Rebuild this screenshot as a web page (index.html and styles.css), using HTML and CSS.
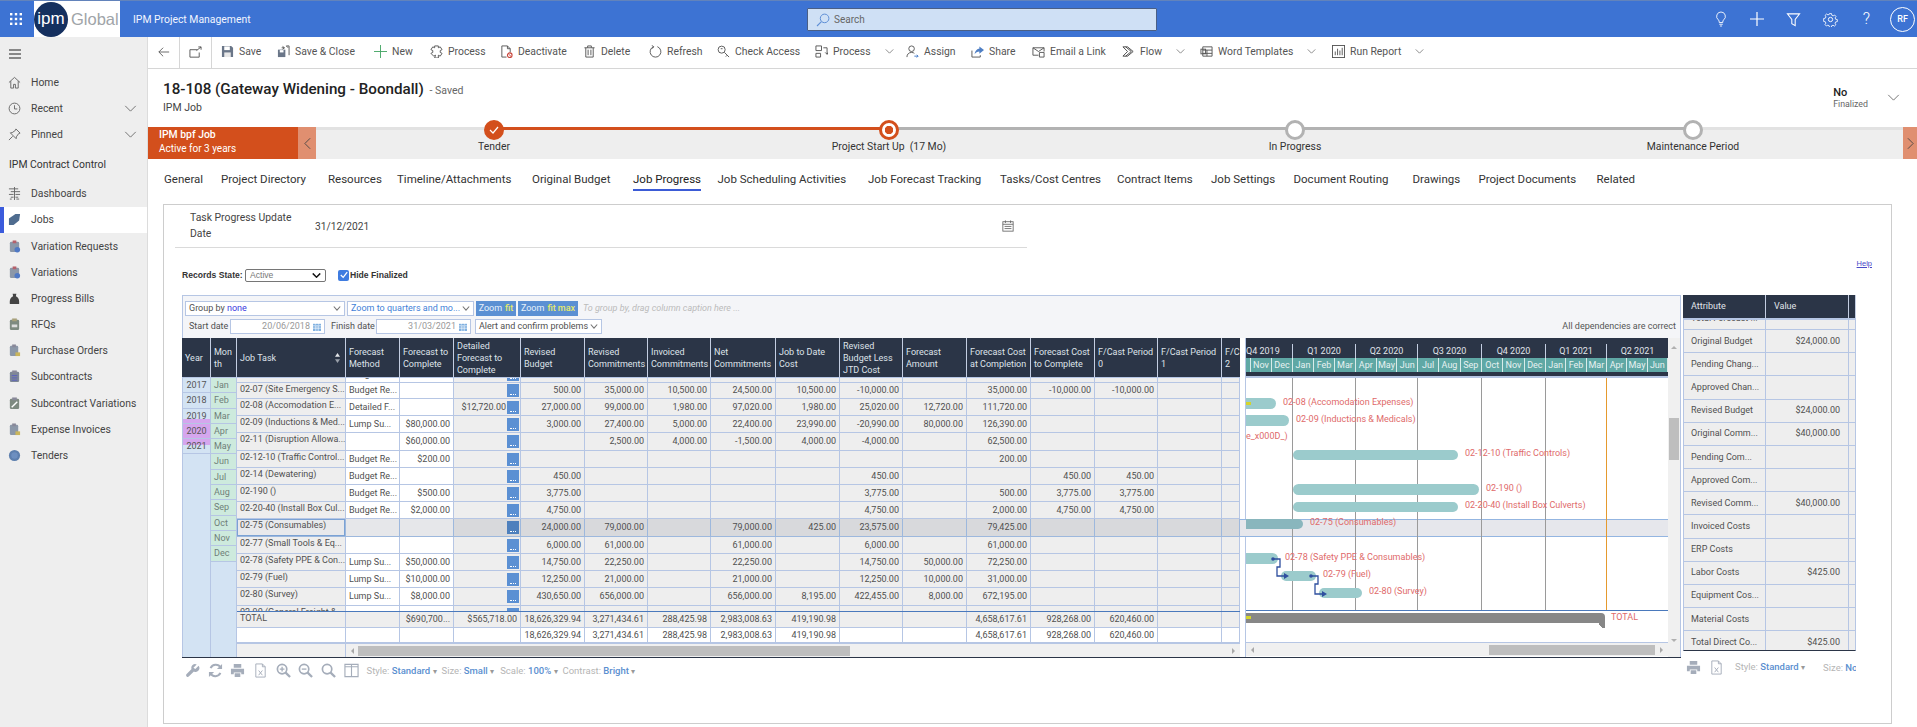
FILE: index.html
```html
<!DOCTYPE html>
<html lang="en">
<head>
<meta charset="utf-8">
<title>IPM Project Management</title>
<link rel="stylesheet" href="styles.css">
</head>
<body>
<header class="top">
  <svg class="waffle" viewBox="0 0 12 12" width="12" height="12"><g fill="#fff"><rect x="0" y="0" width="2.4" height="2.4"/><rect x="4.8" y="0" width="2.4" height="2.4"/><rect x="9.6" y="0" width="2.4" height="2.4"/><rect x="0" y="4.8" width="2.4" height="2.4"/><rect x="4.8" y="4.8" width="2.4" height="2.4"/><rect x="9.6" y="4.8" width="2.4" height="2.4"/><rect x="0" y="9.6" width="2.4" height="2.4"/><rect x="4.8" y="9.6" width="2.4" height="2.4"/><rect x="9.6" y="9.6" width="2.4" height="2.4"/></g></svg>
  <div class="logo"><span class="logo-c">ipm</span><span class="logo-g">Global</span></div>
  <div class="app-title">IPM Project Management</div>
  <div class="search">
    <svg viewBox="0 0 14 14" width="14" height="14"><circle cx="8.6" cy="5.4" r="4.3" fill="none" stroke="#5f8fd6" stroke-width="1"/><path d="M5.4 8.6 1 13" stroke="#5f8fd6" stroke-width="1.1"/></svg>
    <span>Search</span>
  </div>
  <div class="top-icons">
    <svg viewBox="0 0 16 18" width="14" height="16"><path d="M8 1a5 5 0 0 0-3 9c.8.7 1 1.5 1 3h4c0-1.500.2-2.300 1-3a5 5 0 0 0-3-9zM6 15h4M6.800 17h2.400" fill="none" stroke="#fff"/></svg>
    <svg viewBox="0 0 16 16" width="16" height="16"><path d="M8 1v14M1 8h14" stroke="#fff" stroke-width="1.200"/></svg>
    <svg viewBox="0 0 16 16" width="15" height="15"><path d="M1.500 2h13L9.800 8v6.500L6.200 12.500V8z" fill="none" stroke="#fff" stroke-width="1.100"/></svg>
    <svg viewBox="0 0 16 16" width="15" height="15"><g fill="none" stroke="#fff"><circle cx="8" cy="8" r="2.300"/><path d="M6.800 1h2.400l.4 2 1.500.7 1.800-1 1.600 1.700-1 1.700.6 1.600 2 .4v2.400l-2 .4-.7 1.500 1 1.800-1.700 1.600-1.700-1-1.600.6-.4 2H6.800l-.4-2-1.500-.7-1.800 1-1.600-1.700 1-1.700-.6-1.600-2-.4V6.800l2-.4.7-1.500-1-1.800 1.700-1.600 1.700 1 1.600-.6z" transform="translate(.8 .8) scale(.9)"/></g></svg>
    <span class="q">?</span>
    <span class="avatar">RF</span>
  </div>
</header>
<div class="shell">
  <aside class="side">
    <svg class="burger" viewBox="0 0 12 10" width="12" height="10"><path d="M0 1h12M0 5h12M0 9h12" stroke="#222" stroke-width="1.200"/></svg>
    <a class="item"><svg viewBox="0 0 14 14" width="13" height="13"><path d="M1 7 7 1.500 13 7M3 5.500V13h3V9h2v4h3V5.500" fill="none" stroke="#666"/></svg>Home</a>
    <a class="item"><svg viewBox="0 0 14 14" width="13" height="13"><circle cx="7" cy="7" r="5.800" fill="none" stroke="#666"/><path d="M7 3.500V7.500H10" fill="none" stroke="#666"/></svg>Recent<svg class="chev" viewBox="0 0 14 8" width="13" height="7"><path d="M1 1 7 7 13 1" fill="none" stroke="#666"/></svg></a>
    <a class="item"><svg viewBox="0 0 14 14" width="13" height="13"><path d="M8.500 1 13 5.500 11.500 6 9 9.500 8.800 11.500 2.500 5.200 4.500 5 8 2.500zM5 9 1 13" fill="none" stroke="#666"/></svg>Pinned<svg class="chev" viewBox="0 0 14 8" width="13" height="7"><path d="M1 1 7 7 13 1" fill="none" stroke="#666"/></svg></a>
    <div class="side-head">IPM Contract Control</div>
    <a class="item"><svg viewBox="0 0 14 14" width="13" height="13"><path d="M7 0v14M1 2h10M3 5h10M1 8h5M8 8h5M3 11h3M8 11h3M2 13h2M9 13h3" fill="none" stroke="#666"/></svg>Dashboards</a>
    <a class="item on"><svg viewBox="0 0 14 14" width="13" height="13"><path d="M1 6 8 1l5 0-1 7-6 5-5 0z" fill="#4f6c8f"/></svg>Jobs</a>
    <a class="item"><svg viewBox="0 0 14 14" width="13" height="13"><rect x="2" y="2" width="10" height="11" rx="1.500" fill="#8b97a8"/><rect x="5" y="0.500" width="4" height="3" fill="#b5616b"/><circle cx="10" cy="10.500" r="3" fill="#4f78c4"/></svg>Variation Requests</a>
    <a class="item"><svg viewBox="0 0 14 14" width="13" height="13"><rect x="2" y="2" width="10" height="11" rx="1.500" fill="#8b97a8"/><rect x="5" y="0.500" width="4" height="3" fill="#b5616b"/><circle cx="10" cy="10.500" r="3" fill="#4f78c4"/></svg>Variations</a>
    <a class="item"><svg viewBox="0 0 14 14" width="13" height="13"><path d="M5 2h4L8.500 4.500C11 5.500 12.500 8 12 13H2C1.500 8 3 5.500 5.500 4.500z" fill="#444"/></svg>Progress Bills</a>
    <a class="item"><svg viewBox="0 0 14 14" width="13" height="13"><rect x="2" y="2" width="10" height="11" rx="1.500" fill="#7e8a80"/><rect x="4.500" y="0.500" width="5" height="3" fill="#a7a07a"/><rect x="4" y="7" width="6" height="3" fill="#ddd"/></svg>RFQs</a>
    <a class="item"><svg viewBox="0 0 14 14" width="13" height="13"><rect x="2" y="2" width="9" height="11" rx="1.500" fill="#8b97a8"/><rect x="4.500" y="0.500" width="4" height="3" fill="#889"/><rect x="8" y="9" width="5" height="4" fill="#c9b55c"/></svg>Purchase Orders</a>
    <a class="item"><svg viewBox="0 0 14 14" width="13" height="13"><rect x="2" y="2" width="10" height="11" rx="1.500" fill="#7d8796"/><rect x="4.500" y="0.500" width="5" height="3" fill="#889"/><path d="M4 6h6M4 8.500h6M4 11h6" stroke="#5b5fc0"/></svg>Subcontracts</a>
    <a class="item"><svg viewBox="0 0 14 14" width="13" height="13"><rect x="2" y="2" width="10" height="11" rx="1.500" fill="#7e8a80"/><rect x="4.500" y="0.500" width="5" height="3" fill="#889"/><path d="M4 11 10 5" stroke="#fff" stroke-width="1.500"/></svg>Subcontract Variations</a>
    <a class="item"><svg viewBox="0 0 14 14" width="13" height="13"><rect x="2" y="2" width="9" height="11" rx="1.500" fill="#8b97a8"/><rect x="4.500" y="0.500" width="4" height="3" fill="#889"/><rect x="8" y="9" width="5" height="4" fill="#c9b55c"/></svg>Expense Invoices</a>
    <a class="item"><svg viewBox="0 0 14 14" width="13" height="13"><circle cx="7" cy="7" r="6" fill="#5d7fae"/><circle cx="7" cy="7" r="3.500" fill="#6d8fc0"/></svg>Tenders</a>
  </aside>
  <main class="main">
    <nav class="cmd">
      <div class="cmd-nav"><svg viewBox="0 0 14 14" width="12" height="12"><path d="M13 7H1M6 2 1 7 6 12" fill="none" stroke="#555"/></svg></div>
      <div class="cmd-nav"><svg viewBox="0 0 14 14" width="13" height="13"><path d="M1 4h8M1 4v8h10V7M8 5l5-4M10 1h3v3" fill="none" stroke="#555"/></svg></div>
      <a class="c"><svg viewBox="0 0 14 14" width="13" height="13"><path d="M1 1h10l2 2v10H1z" fill="#6a7688"/><rect x="3.500" y="1.500" width="6" height="4" fill="#fff"/><rect x="3.500" y="8" width="7" height="5" fill="#e8e8e8"/></svg>Save</a>
      <a class="c"><svg viewBox="0 0 14 14" width="13" height="13"><path d="M1 5h8v8H1z" fill="#6a7688"/><rect x="3" y="5.500" width="4" height="2.500" fill="#fff"/><path d="M5 3h3M6 1.500 8 3 6 4.500M13 1v10M10 1h3M12 3l-2-2" fill="none" stroke="#555"/></svg>Save &amp; Close</a>
      <a class="c"><svg viewBox="0 0 14 14" width="13" height="13"><path d="M7 0v14M0 7h14" stroke="#45a565"/></svg>New</a>
      <a class="c"><svg viewBox="0 0 14 14" width="13" height="13"><path d="M5 1h4v2l2-1 2 3-2 1 0 2 2 1-2 3-2-1v3H5l1-3-2 1-3-3 2-1V6L1 5l2-3 2 1z" fill="none" stroke="#555"/></svg>Process</a>
      <a class="c"><svg viewBox="0 0 14 14" width="13" height="13"><path d="M2 1h6l3 3v4M2 1v12h5M8 1v3h3" fill="none" stroke="#555"/><circle cx="10.500" cy="11" r="2.500" fill="none" stroke="#c8443a" stroke-width="1.200"/><path d="M9 9.500l3 3" stroke="#c8443a"/></svg>Deactivate</a>
      <a class="c"><svg viewBox="0 0 14 14" width="13" height="13"><path d="M1.500 3h11M5 3V1h4v2M3 3v10h8V3M5.500 5v6M8.500 5v6" fill="none" stroke="#555"/></svg>Delete</a>
      <a class="c"><svg viewBox="0 0 14 14" width="13" height="13"><path d="M9 1.800A5.800 5.800 0 1 1 5 1.800M5 1.800 3 .5M5 1.800 3.800 3.800" fill="none" stroke="#555"/></svg>Refresh</a>
      <a class="c"><svg viewBox="0 0 14 14" width="13" height="13"><circle cx="5" cy="5" r="3.800" fill="none" stroke="#555"/><path d="M8 8l5 5M11 11l-1.500 1.500M4 4h2" fill="none" stroke="#555"/></svg>Check Access</a>
      <a class="c"><svg viewBox="0 0 14 14" width="13" height="13"><path d="M1 1h6v5H1zM1 9h5v4H1zM9 3h4v7M11 8l2 2 1-2" fill="none" stroke="#555"/></svg>Process<svg class="cv" viewBox="0 0 10 6" width="9" height="5"><path d="M.5.500 5 5 9.500.5" fill="none" stroke="#777"/></svg></a>
      <a class="c"><svg viewBox="0 0 14 14" width="13" height="13"><circle cx="6" cy="4" r="3" fill="none" stroke="#555"/><path d="M1 13c0-3 2-5 5-5 1.500 0 2.500.5 3 1" fill="none" stroke="#555"/><path d="M9 12h4M11.500 10.500 13 12l-1.500 1.500" fill="none" stroke="#3f78c8"/></svg>Assign</a>
      <a class="c"><svg viewBox="0 0 14 14" width="13" height="13"><path d="M1 6v7h9v-2" fill="none" stroke="#555"/><path d="M4 10c0-4 3-6 5-6V1.500l5 4-5 4V7C7 7 5 8 4 10z" fill="#4f7fc4"/></svg>Share</a>
      <a class="c"><svg viewBox="0 0 14 14" width="13" height="13"><path d="M1 3h12v4M1 3v8h6M1 3l6 4 6-4" fill="none" stroke="#555"/><path d="M8 8h5v5H8z" fill="none" stroke="#555"/></svg>Email a Link</a>
      <a class="c"><svg viewBox="0 0 14 14" width="13" height="13"><path d="M1 2h5l6 5-6 5H1l5-5zM4 2l6 5-6 5" fill="none" stroke="#444"/></svg>Flow<svg class="cv" viewBox="0 0 10 6" width="9" height="5"><path d="M.5.500 5 5 9.500.5" fill="none" stroke="#777"/></svg></a>
      <a class="c"><svg viewBox="0 0 14 14" width="13" height="13"><path d="M3 2h10v10H3zM3 5.500h10M3 9h10M7.500 5.500V12" fill="none" stroke="#555"/><rect x="1" y="4.500" width="5" height="5" fill="none" stroke="#555"/></svg>Word Templates<svg class="cv" viewBox="0 0 10 6" width="9" height="5"><path d="M.5.500 5 5 9.500.5" fill="none" stroke="#777"/></svg></a>
      <a class="c"><svg viewBox="0 0 14 14" width="13" height="13"><rect x=".5" y=".5" width="13" height="13" fill="none" stroke="#555"/><path d="M3.500 11V7M6 11V4M8.500 11V6M11 11V3" stroke="#555"/></svg>Run Report<svg class="cv" viewBox="0 0 10 6" width="9" height="5"><path d="M.5.500 5 5 9.500.5" fill="none" stroke="#777"/></svg></a>
    </nav>
    <section class="head">
      <div>
        <h1>18-108 (Gateway Widening - Boondall) <small>- Saved</small></h1>
        <div class="entity">IPM Job</div>
      </div>
      <div class="hfield">
        <div><b>No</b><span>Finalized</span></div>
        <svg viewBox="0 0 14 8" width="13" height="7"><path d="M1 1 7 7 13 1" fill="none" stroke="#666"/></svg>
      </div>
    </section>
    <section class="bpf">
      <div class="bpf-flag"><b>IPM bpf Job</b><span>Active for 3 years</span></div>
      <div class="bpf-arrow"><svg viewBox="0 0 8 14" width="7" height="13"><path d="M7 1 1 7 7 13" fill="none" stroke="#444"/></svg></div>
      <div class="bpf-track">
        <i class="seg seg-a"></i><i class="seg seg-b"></i><i class="seg seg-c"></i><i class="seg seg-d"></i>
        <div class="st st1"><span class="dot done"><svg viewBox="0 0 10 8" width="10" height="8"><path d="M1 4 4 7 9 1" fill="none" stroke="#fff" stroke-width="1.200"/></svg></span><em>Tender</em></div>
        <div class="st st2"><span class="dot cur"></span><em>Project Start Up&nbsp; (17 Mo)</em></div>
        <div class="st st3"><span class="dot"></span><em>In Progress</em></div>
        <div class="st st4"><span class="dot"></span><em>Maintenance Period</em></div>
      </div>
      <div class="bpf-arrow end"><svg viewBox="0 0 8 14" width="7" height="13"><path d="M1 1 7 7 1 13" fill="none" stroke="#444"/></svg></div>
    </section>
    <nav class="tabs">
      <a>General</a><a>Project Directory</a><a>Resources</a><a>Timeline/Attachments</a><a>Original Budget</a><a class="act">Job Progress</a><a>Job Scheduling Activities</a><a>Job Forecast Tracking</a><a>Tasks/Cost Centres</a><a>Contract Items</a><a>Job Settings</a><a>Document Routing</a><a>Drawings</a><a>Project Documents</a><a>Related</a>
    </nav>
    <section class="card">
      <div class="field">
        <label>Task Progress Update Date</label>
        <span class="fval">31/12/2021</span>
        <svg viewBox="0 0 14 14" width="12" height="12"><rect x="1" y="2" width="12" height="11" fill="none" stroke="#666"/><path d="M1 5h12M4 .5v3M10 .5v3M3 7.500h8M3 10h8" fill="none" stroke="#666"/></svg>
      </div>
      <div class="rec">
        <b class="rl">Records State:</b>
        <span class="recsel">Active<svg viewBox="0 0 10 6" width="9" height="5"><path d="M.5.500 5 5 9.500.5" fill="none" stroke="#111" stroke-width="1.800"/></svg></span>
        <span class="chk"><svg viewBox="0 0 10 10" width="8" height="8"><path d="M1 5 4 8 9 1.500" fill="none" stroke="#fff" stroke-width="1.600"/></svg></span>
        <b>Hide Finalized</b>
        <a class="help">Help</a>
      </div>
      <div class="tgrow">
        <div class="tg-wrap">
          <div class="tg">
            <div class="tb">
              <div class="tb-row">
                <div class="sel w160"><span>Group by <u>none</u></span><svg viewBox="0 0 10 6" width="8" height="5"><path d="M1 .5 5 5 9 .5" fill="none" stroke="#777" stroke-width="1.400"/></svg></div>
                <div class="sel w127"><span><u class="bl">Zoom to quarters and mo...</u></span><svg viewBox="0 0 10 6" width="8" height="5"><path d="M1 .5 5 5 9 .5" fill="none" stroke="#777" stroke-width="1.400"/></svg></div>
                <span class="zb z1">Zoom <b>fit</b></span>
                <span class="zb z2">Zoom <b>fit max</b></span>
                <i class="hint">To group by, drag column caption here ...</i>
              </div>
              <div class="tb-row r2">
                <span class="lb">Start date</span>
                <div class="inp"><span>20/06/2018</span><svg viewBox="0 0 10 10" width="8" height="8"><rect y="1" width="10" height="9" fill="#7fb0e0"/><path d="M0 3.500h10M3.500 3.500V10M6.500 3.500V10M0 6.500h10M3 0v2M7 0v2" stroke="#fff" stroke-width=".8"/></svg></div>
                <span class="lb l2">Finish date</span>
                <div class="inp"><span>31/03/2021</span><svg viewBox="0 0 10 10" width="8" height="8"><rect y="1" width="10" height="9" fill="#7fb0e0"/><path d="M0 3.500h10M3.500 3.500V10M6.500 3.500V10M0 6.500h10M3 0v2M7 0v2" stroke="#fff" stroke-width=".8"/></svg></div>
                <div class="sel w127b"><span>Alert and confirm problems</span><svg viewBox="0 0 10 6" width="8" height="5"><path d="M1 .5 5 5 9 .5" fill="none" stroke="#777" stroke-width="1.400"/></svg></div>
                <span class="deps">All dependencies are correct</span>
              </div>
            </div>
            <div class="tgbody">
              <div class="gridp">
                <table class="hdr">
                  <colgroup><col class="c-y"><col class="c-m"><col class="c-j"><col class="c-fm"><col class="c-fc"><col class="c-df"><col class="c-rb"><col class="c-rc"><col class="c-ic"><col class="c-nc"><col class="c-jd"><col class="c-rl"><col class="c-fa"><col class="c-ca"><col class="c-ct"><col class="c-p0"><col class="c-p1"><col class="c-p2"></colgroup>
                  <tr><th>Year</th><th>Mon<br>th</th><th class="jt">Job Task<svg viewBox="0 0 6 12" width="5" height="10"><path d="M3 0 6 4.500H0z" fill="#e4e6ea"/><path d="M3 12 6 7.500H0z" fill="#9aa0aa"/></svg></th><th>Forecast Method</th><th>Forecast to Complete</th><th>Detailed Forecast to Complete</th><th>Revised Budget</th><th>Revised Commitments</th><th>Invoiced Commitments</th><th>Net Commitments</th><th>Job to Date Cost</th><th>Revised Budget Less JTD Cost</th><th>Forecast Amount</th><th>Forecast Cost at Completion</th><th>Forecast Cost to Complete</th><th>F/Cast Period 0</th><th>F/Cast Period 1</th><th class="cl">F/C<br>2</th></tr>
                </table>
                <div class="gbody">
                  <div class="ycol">
                    <i class="ymark"></i>
                    <span>2017</span><span>2018</span><span>2019</span><span>2020</span><span>2021</span>
                  </div>
                  <div class="mcol">
                    <span>Jan</span><span>Feb</span><span>Mar</span><span>Apr</span><span>May</span><span>Jun</span><span>Jul</span><span>Aug</span><span>Sep</span><span>Oct</span><span>Nov</span><span>Dec</span>
                  </div>
                  <div class="rows">
                    <div class="scroller">
                      <table class="dt">
                        <colgroup><col class="c-j"><col class="c-fm"><col class="c-fc"><col class="c-df"><col class="c-rb"><col class="c-rc"><col class="c-ic"><col class="c-nc"><col class="c-jd"><col class="c-rl"><col class="c-fa"><col class="c-ca"><col class="c-ct"><col class="c-p0"><col class="c-p1"><col class="c-p2"></colgroup>
                        <tr><td class="j">02-06 (Temporary Wor...</td><td class="m">Budget Re...</td><td class="w"></td><td><i class="btn"></i></td><td></td><td></td><td></td><td></td><td></td><td></td><td></td><td></td><td></td><td></td><td></td><td></td></tr>
                        <tr class="s"><td class="j">02-07 (Site Emergency S...</td><td class="m">Budget Re...</td><td class="w"></td><td><i class="btn"></i></td><td>500.00</td><td>35,000.00</td><td>10,500.00</td><td>24,500.00</td><td>10,500.00</td><td>-10,000.00</td><td></td><td>35,000.00</td><td>-10,000.00</td><td>-10,000.00</td><td></td><td></td></tr>
                        <tr><td class="j">02-08 (Accomodation E...</td><td class="m">Detailed F...</td><td class="w"></td><td>$12,720.00<i class="btn"></i></td><td>27,000.00</td><td>99,000.00</td><td>1,980.00</td><td>97,020.00</td><td>1,980.00</td><td>25,020.00</td><td>12,720.00</td><td>111,720.00</td><td></td><td></td><td></td><td></td></tr>
                        <tr><td class="j">02-09 (Inductions &amp; Med...</td><td class="m">Lump Su...</td><td class="w">$80,000.00</td><td><i class="btn"></i></td><td>3,000.00</td><td>27,400.00</td><td>5,000.00</td><td>22,400.00</td><td>23,990.00</td><td>-20,990.00</td><td>80,000.00</td><td>126,390.00</td><td></td><td></td><td></td><td></td></tr>
                        <tr class="t"><td class="j">02-11 (Disruption Allowa...</td><td class="m"></td><td class="w">$60,000.00</td><td><i class="btn"></i></td><td></td><td>2,500.00</td><td>4,000.00</td><td>-1,500.00</td><td>4,000.00</td><td>-4,000.00</td><td></td><td>62,500.00</td><td></td><td></td><td></td><td></td></tr>
                        <tr><td class="j">02-12-10 (Traffic Control...</td><td class="m">Budget Re...</td><td class="w">$200.00</td><td><i class="btn"></i></td><td></td><td></td><td></td><td></td><td></td><td></td><td></td><td>200.00</td><td></td><td></td><td></td><td></td></tr>
                        <tr><td class="j">02-14 (Dewatering)</td><td class="m">Budget Re...</td><td class="w"></td><td><i class="btn"></i></td><td>450.00</td><td></td><td></td><td></td><td></td><td>450.00</td><td></td><td></td><td>450.00</td><td>450.00</td><td></td><td></td></tr>
                        <tr><td class="j">02-190 ()</td><td class="m">Budget Re...</td><td class="w">$500.00</td><td><i class="btn"></i></td><td>3,775.00</td><td></td><td></td><td></td><td></td><td>3,775.00</td><td></td><td>500.00</td><td>3,775.00</td><td>3,775.00</td><td></td><td></td></tr>
                        <tr><td class="j">02-20-40 (Install Box Cul...</td><td class="m">Budget Re...</td><td class="w">$2,000.00</td><td><i class="btn"></i></td><td>4,750.00</td><td></td><td></td><td></td><td></td><td>4,750.00</td><td></td><td>2,000.00</td><td>4,750.00</td><td>4,750.00</td><td></td><td></td></tr>
                        <tr class="t sel-row"><td class="j">02-75 (Consumables)</td><td class="lt"></td><td class="lt"></td><td><i class="btn"></i></td><td>24,000.00</td><td>79,000.00</td><td></td><td>79,000.00</td><td>425.00</td><td>23,575.00</td><td></td><td>79,425.00</td><td></td><td></td><td></td><td></td></tr>
                        <tr><td class="j">02-77 (Small Tools &amp; Eq...</td><td class="m"></td><td class="w"></td><td><i class="btn"></i></td><td>6,000.00</td><td>61,000.00</td><td></td><td>61,000.00</td><td></td><td>6,000.00</td><td></td><td>61,000.00</td><td></td><td></td><td></td><td></td></tr>
                        <tr><td class="j">02-78 (Safety PPE &amp; Con...</td><td class="m">Lump Su...</td><td class="w">$50,000.00</td><td><i class="btn"></i></td><td>14,750.00</td><td>22,250.00</td><td></td><td>22,250.00</td><td></td><td>14,750.00</td><td>50,000.00</td><td>72,250.00</td><td></td><td></td><td></td><td></td></tr>
                        <tr><td class="j">02-79 (Fuel)</td><td class="m">Lump Su...</td><td class="w">$10,000.00</td><td><i class="btn"></i></td><td>12,250.00</td><td>21,000.00</td><td></td><td>21,000.00</td><td></td><td>12,250.00</td><td>10,000.00</td><td>31,000.00</td><td></td><td></td><td></td><td></td></tr>
                        <tr class="t"><td class="j">02-80 (Survey)</td><td class="m">Lump Su...</td><td class="w">$8,000.00</td><td><i class="btn"></i></td><td>430,650.00</td><td>656,000.00</td><td></td><td>656,000.00</td><td>8,195.00</td><td>422,455.00</td><td>8,000.00</td><td>672,195.00</td><td></td><td></td><td></td><td></td></tr>
                        <tr><td class="j">02-90 (General Freight &amp;...</td><td class="m"></td><td class="w"></td><td><i class="btn"></i></td><td></td><td></td><td></td><td></td><td></td><td></td><td></td><td></td><td></td><td></td><td></td><td></td></tr>
                      </table>
                    </div>
                    <table class="dt tot">
                      <colgroup><col class="c-j"><col class="c-fm"><col class="c-fc"><col class="c-df"><col class="c-rb"><col class="c-rc"><col class="c-ic"><col class="c-nc"><col class="c-jd"><col class="c-rl"><col class="c-fa"><col class="c-ca"><col class="c-ct"><col class="c-p0"><col class="c-p1"><col class="c-p2"></colgroup>
                      <tr><td class="j">TOTAL</td><td></td><td>$690,700...</td><td>$565,718.00</td><td>18,626,329.94</td><td>3,271,434.61</td><td>288,425.98</td><td>2,983,008.63</td><td>419,190.98</td><td></td><td></td><td>4,658,617.61</td><td>928,268.00</td><td>620,460.00</td><td></td><td></td></tr>
                      <tr class="wh"><td class="j"></td><td></td><td></td><td></td><td>18,626,329.94</td><td>3,271,434.61</td><td>288,425.98</td><td>2,983,008.63</td><td>419,190.98</td><td></td><td></td><td>4,658,617.61</td><td>928,268.00</td><td>620,460.00</td><td></td><td></td></tr>
                    </table>
                    <div class="hs">
                      <div class="hs-l"></div>
                      <div class="hbar"><i class="al"></i><i class="thumb t1"></i><i class="ar"></i></div>
                    </div>
                  </div>
                </div>
              </div>
              <div class="gantt">
                <div class="gh">
                  <div class="qrow"><span class="q0">Q4 2019</span><span>Q1 2020</span><span>Q2 2020</span><span>Q3 2020</span><span>Q4 2020</span><span>Q1 2021</span><span>Q2 2021</span></div>
                  <div class="qrow mrow">
                    <div class="mq0"><span class="oc"></span><span>Nov</span><span>Dec</span></div>
                    <div><span>Jan</span><span>Feb</span><span>Mar</span></div>
                    <div><span>Apr</span><span>May</span><span>Jun</span></div>
                    <div><span>Jul</span><span>Aug</span><span>Sep</span></div>
                    <div><span>Oct</span><span>Nov</span><span>Dec</span></div>
                    <div><span>Jan</span><span>Feb</span><span>Mar</span></div>
                    <div><span>Apr</span><span>May</span><span>Jun</span></div>
                  </div>
                </div>
                <div class="canvas">
                  <i class="hl" style="top:141px"></i>
                  <i class="vl" style="left:46px"></i><i class="vl" style="left:109px"></i><i class="vl" style="left:171px"></i><i class="vl" style="left:235px"></i><i class="vl" style="left:299px"></i><i class="vl or" style="left:360px"></i>
                  <i class="bar" style="left:0;top:20px;width:30px;height:11px"></i><i class="yel" style="left:0;top:24px"></i><span class="lab" style="left:37px;top:19px">02-08 (Accomodation Expenses)</span>
                  <i class="bar" style="left:0;top:37px;width:43px;height:11px"></i><span class="lab" style="left:50px;top:36px">02-09 (Inductions &amp; Medicals)</span>
                  <span class="lab" style="left:0;top:53px">e_x000D_)</span>
                  <i class="bar full" style="left:47px;top:72px;width:165px;height:10px"></i><span class="lab" style="left:219px;top:70px">02-12-10 (Traffic Controls)</span>
                  <i class="bar full" style="left:47px;top:106px;width:186px;height:11px"></i><span class="lab" style="left:240px;top:105px">02-190 ()</span>
                  <i class="bar full" style="left:47px;top:124px;width:165px;height:10px"></i><span class="lab" style="left:219px;top:122px">02-20-40 (Install Box Culverts)</span>
                  <i class="bar dk" style="left:0;top:141px;width:57px;height:10px"></i><span class="lab" style="left:64px;top:139px">02-75 (Consumables)</span>
                  <i class="bar" style="left:0;top:175px;width:32px;height:11px"></i><span class="lab" style="left:39px;top:174px">02-78 (Safety PPE &amp; Consumables)</span>
                  <i class="bar full" style="left:35px;top:193px;width:35px;height:10px"></i><span class="lab" style="left:77px;top:191px">02-79 (Fuel)</span>
                  <i class="bar full" style="left:73px;top:210px;width:43px;height:10px"></i><span class="lab" style="left:123px;top:208px">02-80 (Survey)</span>
                  <svg class="deps-svg" viewBox="0 0 423 233" width="423" height="233"><g fill="none" stroke="#2f4f9f" stroke-width="1.300"><path d="M27 181H34V189H31V198H41"/><path d="M65 198H72V206H69V216H79"/></g><g fill="#2f4f9f"><circle cx="27" cy="181" r="1.800"/><circle cx="65" cy="198" r="1.800"/><path d="M38 195 43 198 38 201zM76 213 81 216 76 219z"/></g></svg>
                </div>
                <div class="gtot">
                  <div class="tbar"><i class="yel"></i></div>
                  <span class="lab" style="left:365px;top:1px">TOTAL</span>
                </div>
                <div class="hbar gs"><i class="al"></i><i class="thumb t2"></i><i class="ar"></i></div>
              </div>
              <div class="vs"><i class="up"></i><i class="vthumb"></i><i class="dn"></i></div>
            </div>
          </div>
          <div class="tgfoot">
            <svg viewBox="0 0 16 16" width="15" height="15"><path d="M14.500 3 11 6.500 9 5l3.500-3.500A4 4 0 0 0 7 6.500L1.500 12a1.800 1.800 0 0 0 2.500 2.500L9.500 9A4 4 0 0 0 14.500 3z" fill="#a5adba"/></svg>
            <svg viewBox="0 0 16 16" width="15" height="15"><path d="M13.500 5A6 6 0 0 0 2.800 5.500M2.500 11A6 6 0 0 0 13.200 10.500" fill="none" stroke="#a5adba" stroke-width="2.200"/><path d="M15 1v5.500H9.500zM1 15V9.500h5.500z" fill="#a5adba"/></svg>
            <svg viewBox="0 0 16 16" width="15" height="15"><path d="M4 1h8v4H4zM1 6h14v6h-3v-2H4v2H1zM5 11h6v4H5z" fill="#a5adba"/></svg>
            <svg viewBox="0 0 16 16" width="15" height="15"><path d="M3 1h7l3 3v11H3zM10 1v3h3" fill="none" stroke="#a5adba"/><path d="M6 8l4 5M10 8l-4 5" stroke="#a5adba"/></svg>
            <svg viewBox="0 0 16 16" width="15" height="15"><circle cx="6.500" cy="6.500" r="5" fill="none" stroke="#a5adba" stroke-width="1.800"/><path d="M10 10l5 5" stroke="#a5adba" stroke-width="2.400"/><path d="M6.500 4v5M4 6.500h5" stroke="#a5adba" stroke-width="1.400"/></svg>
            <svg viewBox="0 0 16 16" width="15" height="15"><circle cx="6.500" cy="6.500" r="5" fill="none" stroke="#a5adba" stroke-width="1.800"/><path d="M10 10l5 5" stroke="#a5adba" stroke-width="2.400"/><path d="M4 6.500h5" stroke="#a5adba" stroke-width="1.400"/></svg>
            <svg viewBox="0 0 16 16" width="15" height="15"><circle cx="6.500" cy="6.500" r="5" fill="none" stroke="#a5adba" stroke-width="1.800"/><path d="M10 10l5 5" stroke="#a5adba" stroke-width="2.400"/></svg>
            <svg viewBox="0 0 16 16" width="15" height="15"><path d="M1 1.500h14v13H1zM8 1.500v13M1 4h14" fill="none" stroke="#a5adba" stroke-width="1.200"/></svg>
            <span class="ft">Style: <u>Standard</u> <s>▾</s></span>
            <span class="ft">Size: <u>Small</u> <s>▾</s></span>
            <span class="ft">Scale: <u>100%</u> <s>▾</s></span>
            <span class="ft">Contrast: <u>Bright</u> <s>▾</s></span>
          </div>
        </div>
        <div class="panel">
          <div class="ph"><span>Attribute</span><span>Value</span><span></span></div>
          <div class="pbody">
            <div class="pr first"><span>Total Forecast ...</span><span></span><span></span></div>
            <div class="pr"><span>Original Budget</span><span>$24,000.00</span><span></span></div>
            <div class="pr"><span>Pending Chang...</span><span></span><span></span></div>
            <div class="pr"><span>Approved Chan...</span><span></span><span></span></div>
            <div class="pr"><span>Revised Budget</span><span>$24,000.00</span><span></span></div>
            <div class="pr"><span>Original Comm...</span><span>$40,000.00</span><span></span></div>
            <div class="pr"><span>Pending Com...</span><span></span><span></span></div>
            <div class="pr"><span>Approved Com...</span><span></span><span></span></div>
            <div class="pr"><span>Revised Comm...</span><span>$40,000.00</span><span></span></div>
            <div class="pr"><span>Invoiced Costs</span><span></span><span></span></div>
            <div class="pr"><span>ERP Costs</span><span></span><span></span></div>
            <div class="pr"><span>Labor Costs</span><span>$425.00</span><span></span></div>
            <div class="pr"><span>Equipment Cos...</span><span></span><span></span></div>
            <div class="pr"><span>Material Costs</span><span></span><span></span></div>
            <div class="pr"><span>Total Direct Co...</span><span>$425.00</span><span></span></div>
          </div>
          <div class="pfoot">
            <svg viewBox="0 0 16 16" width="15" height="15"><path d="M4 1h8v4H4zM1 6h14v6h-3v-2H4v2H1zM5 11h6v4H5z" fill="#a5adba"/></svg>
            <svg viewBox="0 0 16 16" width="15" height="15"><path d="M3 1h7l3 3v11H3zM10 1v3h3" fill="none" stroke="#a5adba"/><path d="M6 8l4 5M10 8l-4 5" stroke="#a5adba"/></svg>
            <span class="ft p1">Style: <u>Standard</u> <s>▾</s></span>
            <span class="ft p2">Size: <u>Nor</u></span>
          </div>
        </div>
      </div>
    </section>
  </main>
</div>
</body>
</html>
```

FILE: styles.css
```css
* { box-sizing: border-box; }
html, body { margin: 0; padding: 0; }
body { width: 1917px; height: 727px; overflow: hidden; background: #fff; font-family: Roboto, "Open Sans", sans-serif; font-size: 10.400px; color: #333; }
a { color: inherit; text-decoration: none; }

/* top bar */
.top { height: 37px; background: #3d73d3; border-top: 1px solid #6283bb; display: grid; grid-template-columns: 34px 86px 687px 350px 1fr; align-items: center; color: #fff; }
.waffle { justify-self: center; margin-left: -3px; }
.logo { background: #fff; height: 36px; display: flex; align-items: center; overflow: hidden; }
.logo-c { width: 34px; height: 35px; border-radius: 50%; background: #15305f; color: #fff; font: 17px/33px "Liberation Sans", sans-serif; text-align: center; flex: none; }
.logo-g { font: 16.500px "Liberation Sans", sans-serif; color: #a0a4a8; margin-left: 3px; }
.app-title { padding-left: 13px; font-size: 10.400px; color: #f2f6ff; }
.search { height: 23px; margin-top: 1px; background: #cfe0f5; border: 1px solid #4a5f85; border-radius: 1px; display: flex; align-items: center; gap: 4px; padding-left: 8px; color: #666; font-size: 10px; }
.top-icons { display: grid; grid-template-columns: repeat(6, 36.300px); justify-items: center; align-items: center; justify-content: start; padding-left: 546px; }
.q { font-size: 16px; font-weight: 300; line-height: 1; }
.avatar { width: 25px; height: 25px; border: 1px solid #fff; border-radius: 50%; font-size: 9px; font-weight: 500; display: flex; align-items: center; justify-content: center; }

/* layout */
.shell { display: flex; height: 690px; }
.side { width: 148px; flex: none; background: #eee; border-right: 1px solid #dcdcdc; display: flex; flex-direction: column; padding-top: 12px; color: #444; }
.burger { margin: 0 0 10px 9px; flex: none; }
.item { height: 26.200px; flex: none; display: flex; align-items: center; gap: 10px; padding-left: 8px; padding-right: 10px; white-space: nowrap; }
.item svg { flex: none; }
.chev { margin-left: auto; }
.item.on { background: #fff; box-shadow: inset 4px 0 0 #3b5bdc; }
.side-head { height: 33px; flex: none; display: flex; align-items: center; padding-left: 9px; color: #333; }
.main { width: 1769px; flex: none; }

/* command bar */
.cmd { height: 32px; border-bottom: 1px solid #d6d6d6; display: grid; grid-template-columns: 32px 32px 56px 97px 56px 70px 83px 66px 68px 98px 91px 65px 61px 90px 78px 132px auto; align-items: stretch; white-space: nowrap; color: #555; }
.cmd-nav { border-right: 1px solid #d6d6d6; display: flex; align-items: center; justify-content: center; padding-bottom: 1px; }
.c { display: flex; align-items: center; gap: 5px; padding: 0 0 2px 9px; }
.c svg { flex: none; }
.cv { margin-left: 9px; }

/* record header */
.head { height: 58px; display: flex; justify-content: space-between; padding: 9px 17px 0 15px; }
h1 { margin: 0; font-size: 15.200px; font-weight: 500; color: #222; line-height: 22px; white-space: nowrap; }
h1 small { font-size: 10.500px; font-weight: 400; color: #666; margin-left: 2px; }
.entity { font-size: 10.500px; color: #444; line-height: 16px; margin-top: -2px; }
.hfield { display: flex; align-items: center; gap: 19px; height: 34px; margin-top: 2px; }
.hfield b { display: block; font-size: 11px; font-weight: 500; color: #222; }
.hfield span { display: block; font-size: 8.800px; color: #666; }

/* business process flow */
.bpf { height: 32px; display: flex; }
.bpf-flag { width: 150px; background: #d34f1c; color: #fff; padding: 1px 0 0 11px; line-height: 14px; font-size: 10px; white-space: nowrap; }
.bpf-flag b { display: block; font-weight: 500; font-size: 10.400px; }
.bpf-flag span { display: block; }
.bpf-arrow { width: 18px; background: #e08f70; display: flex; align-items: center; justify-content: center; }
.bpf-arrow.end { width: 14px; }
.bpf-track { width: 1587px; background: #eee; position: relative; }
.seg { position: absolute; top: 0; height: 3px; }
.seg-a { left: 0; width: 178px; background: #e2e2e2; }
.seg-b { left: 178px; width: 395px; background: #d34f1c; }
.seg-c { left: 573px; width: 804px; background: #b2b2b2; }
.seg-d { left: 1377px; width: 210px; background: #e2e2e2; }
.st { position: absolute; top: -7px; width: 200px; margin-left: -100px; display: flex; flex-direction: column; align-items: center; }
.st1 { left: 178px; } .st2 { left: 573px; } .st3 { left: 979px; } .st4 { left: 1377px; }
.st em { font-style: normal; color: #333; line-height: 14px; white-space: nowrap; }
.dot { width: 20px; height: 20px; border-radius: 50%; border: 3px solid #b2b2b2; background: #fff; display: flex; align-items: center; justify-content: center; }
.dot.done { background: #d34f1c; border-color: #d34f1c; }
.dot.cur { border-color: #d34f1c; background: radial-gradient(circle, #d34f1c 0 4px, #fff 4.500px); }

/* tabs */
.tabs { height: 45px; display: grid; grid-template-columns: 57px 107px 69px 135px 101px 84.500px 150.500px 132px 117px 94px 82.500px 119px 66px 118px 60px; padding-left: 16px; white-space: nowrap; color: #333; font-size: 11.500px; }
.tabs a { height: 32px; display: flex; align-items: center; padding-top: 8px; justify-self: start; }
.tabs a.act { color: #222; border-bottom: 2px solid #3b5bd6; padding-top: 10px; }

/* form card */
.card { margin-left: 15px; width: 1729px; height: 520px; border: 1px solid #cdcdcd; }
.field { margin-left: 11px; width: 852px; height: 43px; border-bottom: 1px solid #dadada; display: flex; align-items: center; padding: 0 13px 0 15px; color: #444; }
.field label { width: 125px; line-height: 16px; padding-right: 16px; }
.fval { flex: 1; font-size: 10.200px; }
.rec { display: flex; align-items: center; height: 12px; margin: 21px 19px 0 18px; font: 8.600px "Liberation Sans", sans-serif; color: #333; white-space: nowrap; }
.rl { width: 63px; }
.recsel { width: 81px; height: 13px; border: 1px solid #767676; border-radius: 2px; display: flex; align-items: center; justify-content: space-between; padding: 0 4px; color: #777; margin-right: 12px; }
.chk { width: 11px; height: 11px; background: #3f7ce0; border-radius: 2px; display: flex; align-items: center; justify-content: center; margin-right: 1px; }
.help { margin-left: auto; margin-top: -23px; color: #4a4ac8; text-decoration: underline; font-size: 7.500px; }

/* tree grid */
.tgrow { display: flex; margin: 14px 0 0 18px; gap: 2px; font: 9px/11px Roboto, sans-serif; color: #505050; }
.tg-wrap { width: 1499px; flex: none; }
.tg { border-top: 1px solid #b6c6e4; }
.tb { height: 42px; background: #f4f5f8; padding: 5px 0 0 2px; border-left: 1px solid #b6c6e4; border-right: 1px solid #b6c6e4; }
.tb-row { display: flex; height: 15px; align-items: stretch; gap: 2px; }
.tb-row.r2 { margin-top: 3px; gap: 0; }
.sel { background: #fff; border: 1px solid #b6c6e4; display: flex; align-items: center; justify-content: space-between; padding: 0 3px; white-space: nowrap; overflow: hidden; }
.sel u { color: #3a3ae0; text-decoration: none; }
.sel u.bl { color: #3f7fd8; }
.w160 { width: 160px; } .w127 { width: 127px; } .w127b { width: 127px; margin-left: 4px; }
.zb { background: #5b90d3; color: #e8f0fa; display: flex; align-items: center; justify-content: center; gap: 3px; }
.zb b { color: #e6ea6a; font-weight: 500; }
.z1 { width: 40px; } .z2 { width: 60px; }
.hint { color: #bbb; margin-left: 3px; align-self: center; white-space: nowrap; }
.lb { align-self: center; margin-left: 4px; width: 41px; white-space: nowrap; }
.l2 { margin-left: 6px; width: 45px; }
.inp { width: 95px; background: #fff; border: 1px solid #b6c6e4; display: flex; align-items: center; justify-content: flex-end; gap: 3px; padding-right: 3px; color: #999; }
.deps { margin-left: auto; margin-right: 4px; align-self: center; color: #555; }
.tgbody { height: 320px; display: flex; border-bottom: 1px solid #2b3547; }
.gridp { width: 1058px; flex: none; }
.hdr, .dt { table-layout: fixed; border-collapse: separate; border-spacing: 0; }
.hdr { width: 1058px; height: 40px; background: #2b3547; border-bottom: 1px solid #b6c6e4; }
.hdr th { font-weight: 400; text-align: left; color: #dfe3ea; padding: 0 2px 0 3px; border-right: 1px solid #c4cee2; line-height: 12px; vertical-align: middle; overflow: hidden; }
.hdr th:last-child { border-right: 0; white-space: nowrap; }
.hdr .jt svg { float: right; margin: 1px 3px 0 0; }
.c-y { width: 29px; } .c-m { width: 26px; } .c-j { width: 109px; } .c-fm { width: 54px; } .c-fc { width: 54px; } .c-df { width: 67px; } .c-rb { width: 64px; } .c-rc { width: 63px; } .c-ic { width: 63px; } .c-nc { width: 65px; } .c-jd { width: 64px; } .c-rl { width: 63px; } .c-fa { width: 64px; } .c-ca { width: 64px; } .c-ct { width: 64px; } .c-p0 { width: 63px; } .c-p1 { width: 64px; } .c-p2 { width: 18px; }
.gbody { display: flex; height: 279px; }
.ycol { width: 29px; flex: none; background: #d3e3f3; border-left: 1px solid #b6c6e4; border-right: 1px solid #b6c6e4; position: relative; }
.ycol span { display: block; height: 15.300px; line-height: 14px; text-align: center; border-bottom: 1px solid #b6c6e4; position: relative; color: #555; }
.ymark { position: absolute; left: 0; right: 0; top: 41px; height: 26px; background: #d5a6ee; }
.mcol { width: 26px; flex: none; background: #d3e3f3; border-right: 1px solid #b6c6e4; }
.mcol span { display: block; height: 15.300px; line-height: 14px; padding-left: 3px; background: #cdeadd; border-bottom: 1px solid #b6c6e4; color: #6f7f78; }
.rows { width: 1003px; flex: none; }
.scroller { height: 234px; overflow: hidden; border-bottom: 1px solid #4a79bc; }
.dt { width: 1003px; }
.scroller .dt { margin-top: -12px; }
.dt td { height: 17px; padding: 0 3px; text-align: right; background: #eee; border-right: 1px solid #b6c6e4; border-bottom: 1px solid #b6c6e4; white-space: nowrap; overflow: hidden; line-height: 11px; }
.dt tr.s td { height: 16px; }
.dt tr.t td { height: 18px; }
.dt td.j { text-align: left; vertical-align: top; padding-top: 1px; }
.dt td.m { text-align: left; background: #fff; }
.dt td.w { background: #fff; }
.btn { display: inline-block; width: 12px; height: 13px; background: #5b90d3; vertical-align: middle; margin: 0 -2px 0 1px; position: relative; }
.btn::after { content: ""; position: absolute; left: 3px; right: 3px; bottom: 2px; border-bottom: 1px dotted #fff; }
.dt tr.sel-row td { background: #d8d9dc; border-color: #9db8dd; }
.dt tr.sel-row td.lt { background: #e6e7ea; }
.dt tr.sel-row td.j { background: #e8e9ec; box-shadow: inset 0 0 0 1px #7ba2d4; }
.sel-row .btn { background: #4e80bd; }
.dt.tot td { height: 16px; }
.dt.tot .wh td { background: #fff; border-bottom-width: 2px; }
.hs { display: flex; height: 13px; }
.hs-l { width: 109px; background: #f0f0f0; border-right: 1px solid #b6c6e4; }
.hbar { flex: 1; height: 13px; background: #f0f0f0; position: relative; }
.thumb { position: absolute; top: 2px; height: 10px; background: #bebebe; }
.t1 { left: 12px; width: 492px; }
.t2 { left: 243px; width: 166px; }
.al, .ar { position: absolute; top: 4px; border: 3px solid transparent; }
.al { left: 5px; border-right: 3px solid #a8a8a8; border-left-width: 0; }
.ar { right: 5px; border-left: 3px solid #a8a8a8; border-right-width: 0; }

/* gantt */
.gantt { width: 423px; margin-left: 5px; flex: none; border-left: 1px solid #b6c6e4; }
.gh { height: 40px; background: #2b3547; border-bottom: 2px solid #b6c6e4; padding-top: 6px; color: #e0e4ea; }
.qrow { display: grid; grid-template-columns: 47px 63px 62px 64px 64px 61px 61px; height: 14px; line-height: 14px; text-align: center; overflow: hidden; }
.qrow > span { border-right: 1px solid #c4cee2; }
.qrow > span:last-child { border-right: 0; }
.q0 { text-align: right; padding-right: 13px; white-space: nowrap; }
.mrow > div { display: grid; grid-template-columns: repeat(3, 1fr); }
.mrow > div.mq0 { grid-template-columns: 5px 21px 21px; }
.mrow span { background: #5fa8a5; border-right: 1px solid #d9ecea; color: #e8f2f2; }
.canvas { height: 233px; position: relative; border-bottom: 1px solid #4a79bc; }
.hl { position: absolute; left: -6px; right: 0; height: 18px; background: #e6e7ec; border: 1px solid #93b5e1; border-width: 1px 0; }
.vl { position: absolute; top: 0; bottom: 0; width: 1px; background: #9a9a9a; }
.vl.or { background: #e59a2e; }
.bar { position: absolute; background: #9bcbcc; border-radius: 0 6px 6px 0; }
.bar.full { border-radius: 6px; }
.bar.dk { background: #89b6bd; }
.yel { position: absolute; width: 5px; height: 3px; background: #d4d42c; }
.lab { position: absolute; color: #e06a6a; white-space: nowrap; line-height: 11px; }
.deps-svg { position: absolute; left: 0; top: 0; }
.gtot { height: 32px; position: relative; border-bottom: 1px solid #b6c6e4; background: #fff; }
.tbar { position: absolute; left: 0; top: 2px; width: 359px; height: 10px; background: #878787; border-radius: 0 4px 0 0; }
.tbar::after { content: ""; position: absolute; right: 0; top: 10px; width: 6px; height: 5px; background: linear-gradient(225deg, #878787 65%, transparent 65%); }
.tbar .yel { left: 0; top: 3px; }
.hbar.gs { flex: none; }
.vs { width: 13px; flex: none; background: #f0f0f0; position: relative; border-right: 1px solid #b6c6e4; }
.vthumb { position: absolute; left: 1px; width: 10px; top: 80px; height: 42px; background: #bebebe; }
.up, .dn { position: absolute; left: 3px; border: 3px solid transparent; border-top-width: 0; border-bottom: 3px solid #b0b0b0; }
.up { top: 8px; }
.dn { bottom: 15px; transform: rotate(180deg); }

/* footer toolbars */
.tgfoot { display: grid; grid-template-columns: repeat(8, 22.700px) 75px 58.700px 62.300px auto; align-items: center; height: 25px; padding-left: 3px; justify-items: start; }
.ft { color: #b5b5b5; white-space: nowrap; font-size: 9.500px; }
.ft u { color: #5b8fd0; text-decoration: none; font-weight: 500; }
.ft s { color: #999; text-decoration: none; font-size: 8px; }

/* attribute panel */
.panel { width: 173px; flex: none; overflow: hidden; }
.ph { height: 25px; background: #2b3547; border-bottom: 2px solid #b6c6e4; display: grid; grid-template-columns: 83px 83px 7px; color: #e0e4ea; align-items: stretch; }
.ph span { border-right: 1px solid #c4cee2; display: flex; align-items: center; padding-left: 8px; }
.ph span:last-child { padding: 0; }
.pbody { height: 331px; overflow: hidden; border-bottom: 1px solid #2b3547; border-left: 1px solid #b6c6e4; border-right: 1px solid #b6c6e4; }
.pr { display: grid; grid-template-columns: 82px 83px 6px; height: 23.170px; border-bottom: 1px solid #b6c6e4; background: #eee; }
.pr.first { margin-top: -13px; }
.pr span { border-right: 1px solid #b6c6e4; display: flex; align-items: center; padding: 0 8px 0 7px; white-space: nowrap; overflow: hidden; }
.pr span:nth-child(2) { justify-content: flex-end; }
.pfoot { display: flex; align-items: center; height: 32px; padding-left: 3px; white-space: nowrap; }
.pfoot svg { flex: none; }
.pfoot svg + svg { margin-left: 8px; }
.p1 { margin-left: 11px; }
.p2 { margin-left: 18px; }
```
